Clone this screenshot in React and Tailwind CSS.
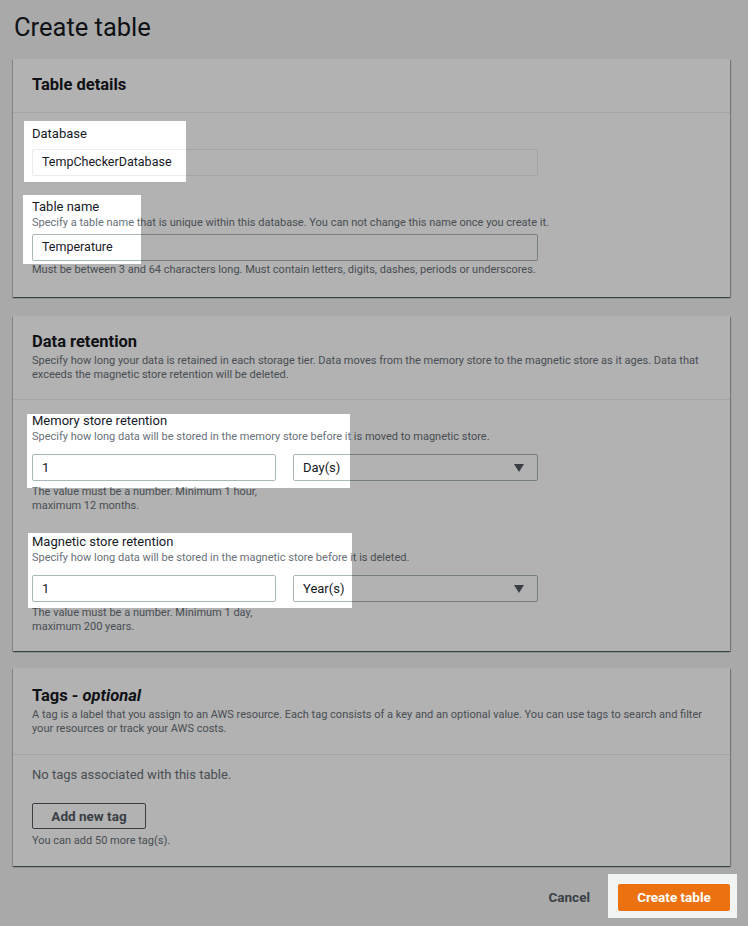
import React from 'react';

// Zonas resaltadas del tutorial (coordenadas de la captura)
const holes = [
  [24, 121, 186, 182],
  [23, 195, 141, 264],
  [27, 414, 350, 488],
  [28, 533, 352, 608],
  [608, 874, 737, 918],
];

const overlayPath =
  'M0 0H748V926H0Z ' + holes.map(([x1, y1, x2, y2]) => `M${x1} ${y1}H${x2}V${y2}H${x1}Z`).join(' ');

const Card = ({ children }) => (
  <div className="bg-white shadow-[0_1px_1px_0_rgba(0,28,36,0.5),1px_1px_1px_0_rgba(0,28,36,0.25),-1px_1px_1px_0_rgba(0,28,36,0.15)]">
    {children}
  </div>
);

const Caret = () => (
  <svg width="10" height="8" viewBox="0 0 10 8">
    <path d="M0 0H10L5 8Z" fill="#545b64" />
  </svg>
);

const RetentionField = ({ label, desc, unit, hint1, hint2 }) => (
  <div>
    <div className="text-[13px] leading-[18px] text-[#16191f]">{label}</div>
    <div className="text-[11px] leading-[14px] text-[#687078]">{desc}</div>
    <div className="mt-[10px] flex gap-[17px]">
      <div className="w-[244px]">
        <div className="h-[27px] border border-[#aab7b8] rounded-[2px] bg-white pl-[9px] flex items-center text-[13px] text-[#16191f]">1</div>
        <div className="mt-[4px] text-[11px] leading-[14px] text-[#687078]">
          {hint1}
          <br />
          {hint2}
        </div>
      </div>
      <div className="w-[245px] h-[27px] border border-[#aab7b8] rounded-[2px] bg-white pl-[9px] pr-[13px] flex items-center justify-between text-[13px] text-[#16191f]">
        <span>{unit}</span>
        <Caret />
      </div>
    </div>
  </div>
);

const App = () => {
  return (
    <div className="relative w-[748px] min-h-[926px] bg-[#f2f3f3] font-['Roboto',sans-serif] overflow-hidden">
      <div className="pl-[13px] pr-[18px] pt-[10px]">
        <h1 className="text-[25.5px] leading-[34px] text-[#16191f] pl-[1px]">Create table</h1>

        <div className="mt-[15px] space-y-[19px]">
          {/* Detalles de la tabla */}
          <Card>
            <div className="h-[54px] px-[19px] flex items-center border-b border-[#eaeded]">
              <h2 className="text-[16.5px] font-bold text-[#16191f]">Table details</h2>
            </div>
            <div className="px-[19px] pt-[12px] pb-[20px]">
              <div className="text-[13px] leading-[18px] text-[#16191f]">Database</div>
              <div className="mt-[6px] w-[506px] h-[27px] border border-[#eaeded] rounded-[2px] bg-white pl-[9px] flex items-center text-[12.5px] text-[#16191f]">
                TempCheckerDatabase
              </div>
              <div className="mt-[22px] text-[13px] leading-[18px] text-[#16191f]">Table name</div>
              <div className="text-[11px] leading-[14px] text-[#687078]">
                Specify a table name that is unique within this database. You can not change this name once you create it.
              </div>
              <div className="mt-[4px] w-[506px] h-[27px] border border-[#aab7b8] rounded-[2px] bg-white pl-[9px] flex items-center text-[12.5px] text-[#16191f]">
                Temperature
              </div>
              <div className="mt-[2px] text-[11px] leading-[14px] text-[#687078]">
                Must be between 3 and 64 characters long. Must contain letters, digits, dashes, periods or underscores.
              </div>
            </div>
          </Card>

          {/* Retención de datos */}
          <Card>
            <div className="px-[19px] pt-[15px] pb-[17px] border-b border-[#eaeded]">
              <h2 className="text-[16.5px] leading-[22px] font-bold text-[#16191f]">Data retention</h2>
              <p className="mt-[1px] text-[11px] leading-[14px] text-[#687078]">
                Specify how long your data is retained in each storage tier. Data moves from the memory store to the magnetic store as it ages. Data that exceeds the magnetic store retention will be deleted.
              </p>
            </div>
            <div className="px-[19px] pt-[12px] pb-[17px] space-y-[20px]">
              <RetentionField
                label="Memory store retention"
                desc="Specify how long data will be stored in the memory store before it is moved to magnetic store."
                unit="Day(s)"
                hint1="The value must be a number. Minimum 1 hour,"
                hint2="maximum 12 months."
              />
              <RetentionField
                label="Magnetic store retention"
                desc="Specify how long data will be stored in the magnetic store before it is deleted."
                unit="Year(s)"
                hint1="The value must be a number. Minimum 1 day,"
                hint2="maximum 200 years."
              />
            </div>
          </Card>

          {/* Etiquetas */}
          <div className="-mt-[2px]">
            <Card>
              <div className="px-[19px] pt-[17px] pb-[18px] border-b border-[#eaeded]">
                <h2 className="text-[16.5px] leading-[22px] font-bold text-[#16191f]">
                  Tags - <i>optional</i>
                </h2>
                <p className="mt-[1px] text-[11px] leading-[14px] text-[#687078]">
                  A tag is a label that you assign to an AWS resource. Each tag consists of a key and an optional value. You can use tags to search and filter your resources or track your AWS costs.
                </p>
              </div>
              <div className="px-[19px] pt-[10px] pb-[18px]">
                <div className="text-[13px] leading-[20px] text-[#687078]">No tags associated with this table.</div>
                <button className="mt-[18px] w-[114px] h-[26px] border border-[#545b64] rounded-[2px] bg-white text-[13.5px] font-bold text-[#545b64]">
                  Add new tag
                </button>
                <div className="mt-[5px] text-[11px] leading-[14px] text-[#687078]">You can add 50 more tag(s).</div>
              </div>
            </Card>
          </div>
        </div>

        <div className="mt-[18px] flex justify-end items-center gap-[28px]">
          <button className="text-[13.5px] font-bold text-[#545b64]">Cancel</button>
          <button className="w-[112px] h-[27px] rounded-[2px] bg-[#ec7211] text-[13.5px] font-bold text-white">
            Create table
          </button>
        </div>
      </div>

      {/* Capa oscura con huecos para los resaltados */}
      <svg className="absolute inset-0 pointer-events-none" width="748" height="926" viewBox="0 0 748 926">
        <path d={overlayPath} fill="rgba(0,0,0,0.3)" fillRule="evenodd" />
      </svg>
    </div>
  );
};

export default App;
